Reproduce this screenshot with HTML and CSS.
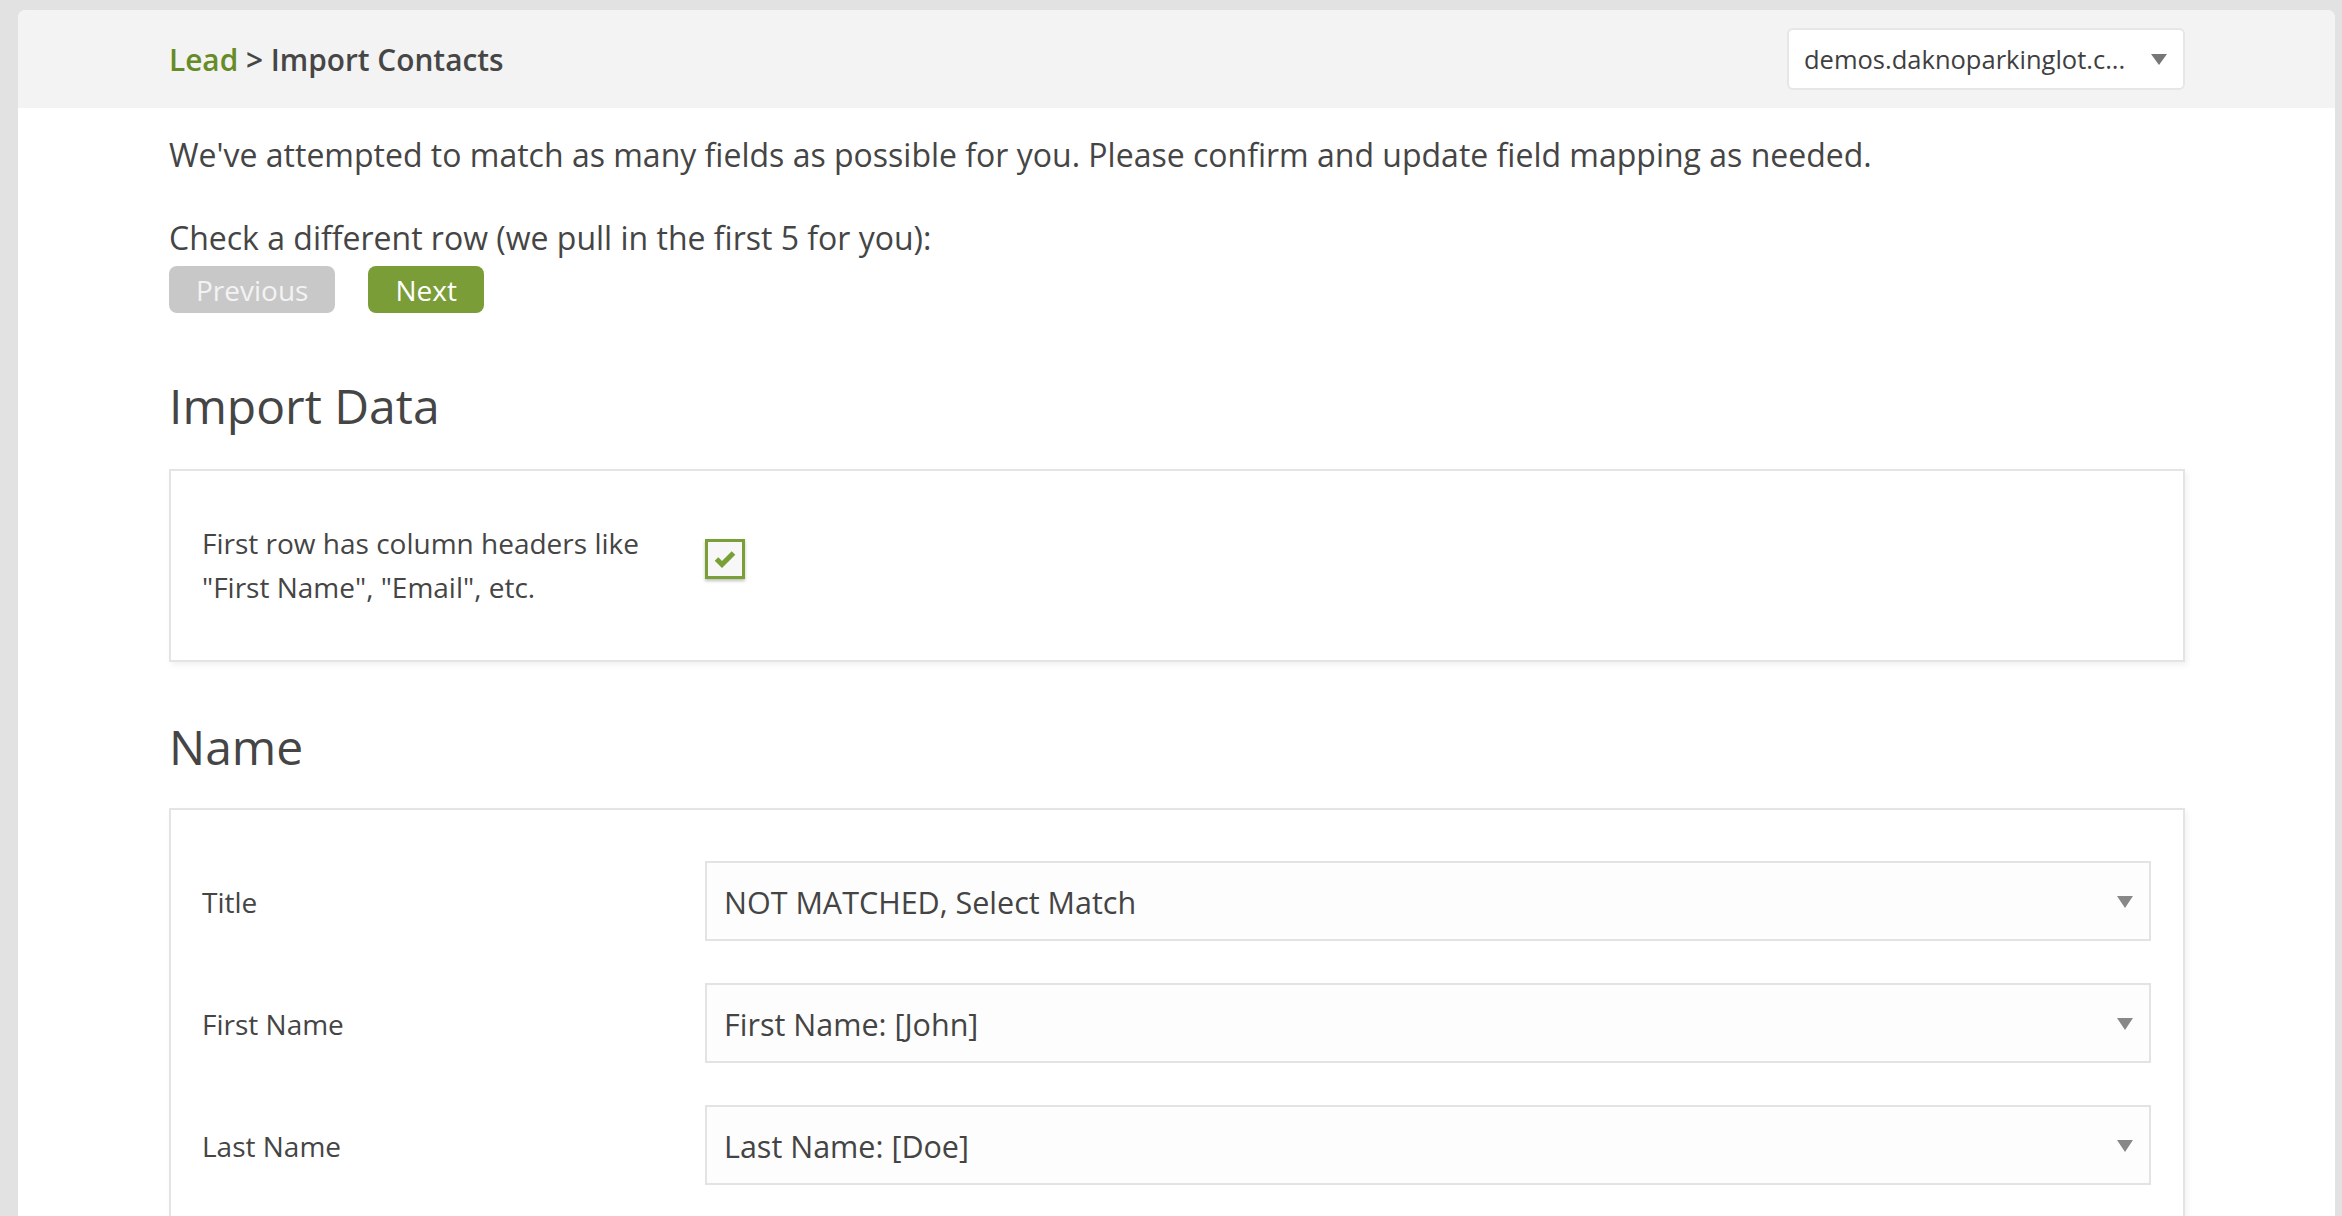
FILE: index.html
```html
<html>
<head>
<title>Lead - Import Contacts</title>
<link rel="stylesheet" href="styles.css">
</head>
<body>

<div class="page">
  <div class="topbar">
    <div class="crumbs"><a class="crumb-link" href="#">Lead</a> &gt; Import Contacts</div>
    <div class="site-picker">
      <span class="site-name">demos.daknoparkinglot.c...</span>
      <span class="caret"></span>
    </div>
  </div>

  <div class="content">
    <p class="intro">We've attempted to match as many fields as possible for you. Please confirm and update field mapping as needed.</p>
    <p class="row-hint">Check a different row (we pull in the first 5 for you):</p>
    <div class="pager">
      <button class="btn btn-off">Previous</button>
      <button class="btn btn-go">Next</button>
    </div>

    <h2 class="section-title first">Import Data</h2>
    <div class="card">
      <div class="field">
        <label class="field-label">First row has column headers like "First Name", "Email", etc.</label>
        <span class="check">
          <svg width="22" height="22" viewBox="0 0 22 22"><polyline points="2.5,11 8,16.5 19.5,5" fill="none" stroke="#79a034" stroke-width="5"/></svg>
        </span>
      </div>
    </div>

    <h2 class="section-title">Name</h2>
    <div class="card card-fields">
      <div class="field">
        <label class="field-label">Title</label>
        <div class="select"><span>NOT MATCHED, Select Match</span><span class="caret caret-lg"></span></div>
      </div>
      <div class="field">
        <label class="field-label">First Name</label>
        <div class="select"><span>First Name: [John]</span><span class="caret caret-lg"></span></div>
      </div>
      <div class="field">
        <label class="field-label">Last Name</label>
        <div class="select"><span>Last Name: [Doe]</span><span class="caret caret-lg"></span></div>
      </div>
    </div>
  </div>
</div>

</body>
</html>
```

FILE: styles.css
```css
html {
  overflow:hidden;
}

body {
  margin:0;
  padding:10px 7px 0 18px;
  background:#e2e2e2;
  font-family:"Open Sans", "Liberation Sans", sans-serif;
  color:#454545;
}

.page {
  background:#fff;
  border-radius:8px 8px 0 0;
  min-height:1300px;
}

.topbar {
  height:98px;
  background:#f3f3f3;
  border-radius:8px 8px 0 0;
  display:flex;
  align-items:center;
  justify-content:space-between;
  padding:0 150px 0 151px;
}

.crumbs {
  font-size:29.8px;
  font-weight:600;
  color:#464646;
}

.crumb-link {
  color:#678b26;
  text-decoration:none;
}

.site-picker {
  width:398px;
  height:62px;
  box-sizing:border-box;
  border:2px solid #e6e6e6;
  border-radius:6px;
  background:#fff;
  display:flex;
  align-items:center;
  justify-content:space-between;
  padding:0 16px 0 15px;
  font-size:25.5px;
  color:#3f3f3f;
}

.caret {
  width:0;
  height:0;
  border-left:8px solid transparent;
  border-right:8px solid transparent;
  border-top:11px solid #777;
}

.caret-lg {
  border-top:12px solid #888;
}

.content {
  padding:0 150px 0 151px;
}

.intro,
.row-hint {
  font-size:32px;
  line-height:45px;
  margin:24px 0 0;
}

.row-hint {
  margin-top:38px;
}

.pager {
  display:flex;
  gap:33px;
  margin:6px 0 8px;
}

.btn {
  height:47px;
  padding:0 27px;
  border:none;
  border-radius:8px;
  font-family:inherit;
  font-size:28px;
  color:#fff;
}

.btn-off {
  background:#c8c8c8;
  color:#f3f3f3;
}

.btn-go {
  background:#7b9d37;
}

.section-title {
  font-size:48px;
  font-weight:400;
  line-height:58px;
  margin:56px 0 32px;
}

.section-title.first {
  margin:64px 0 34px;
}

.card {
  border:2px solid #e4e4e4;
  box-shadow:2px 3px 6px rgba(0,0,0,0.06);
  padding:50px 32px 51px 31px;
}

.card-fields {
  padding-top:51px;
  display:flex;
  flex-direction:column;
  gap:42px;
}

.field {
  display:grid;
  grid-template-columns:503px 1fr;
  align-items:start;
}

.card-fields .field {
  align-items:center;
}

.field-label {
  font-size:28px;
  line-height:44px;
  max-width:460px;
}

.card-fields .field-label {
  padding-top:1px;
}

.check {
  width:40px;
  height:40px;
  box-sizing:border-box;
  border:3px solid #7a9e38;
  background:#f7f7f7;
  box-shadow:0 2px 3px rgba(0,0,0,0.25);
  margin-top:18px;
  display:flex;
  align-items:center;
  justify-content:center;
}

.select {
  height:80px;
  box-sizing:border-box;
  border:2px solid #e3e3e3;
  background:#fdfdfd;
  display:flex;
  align-items:center;
  justify-content:space-between;
  padding:1px 16px 0 17px;
  font-size:30.5px;
  color:#444;
}
```
